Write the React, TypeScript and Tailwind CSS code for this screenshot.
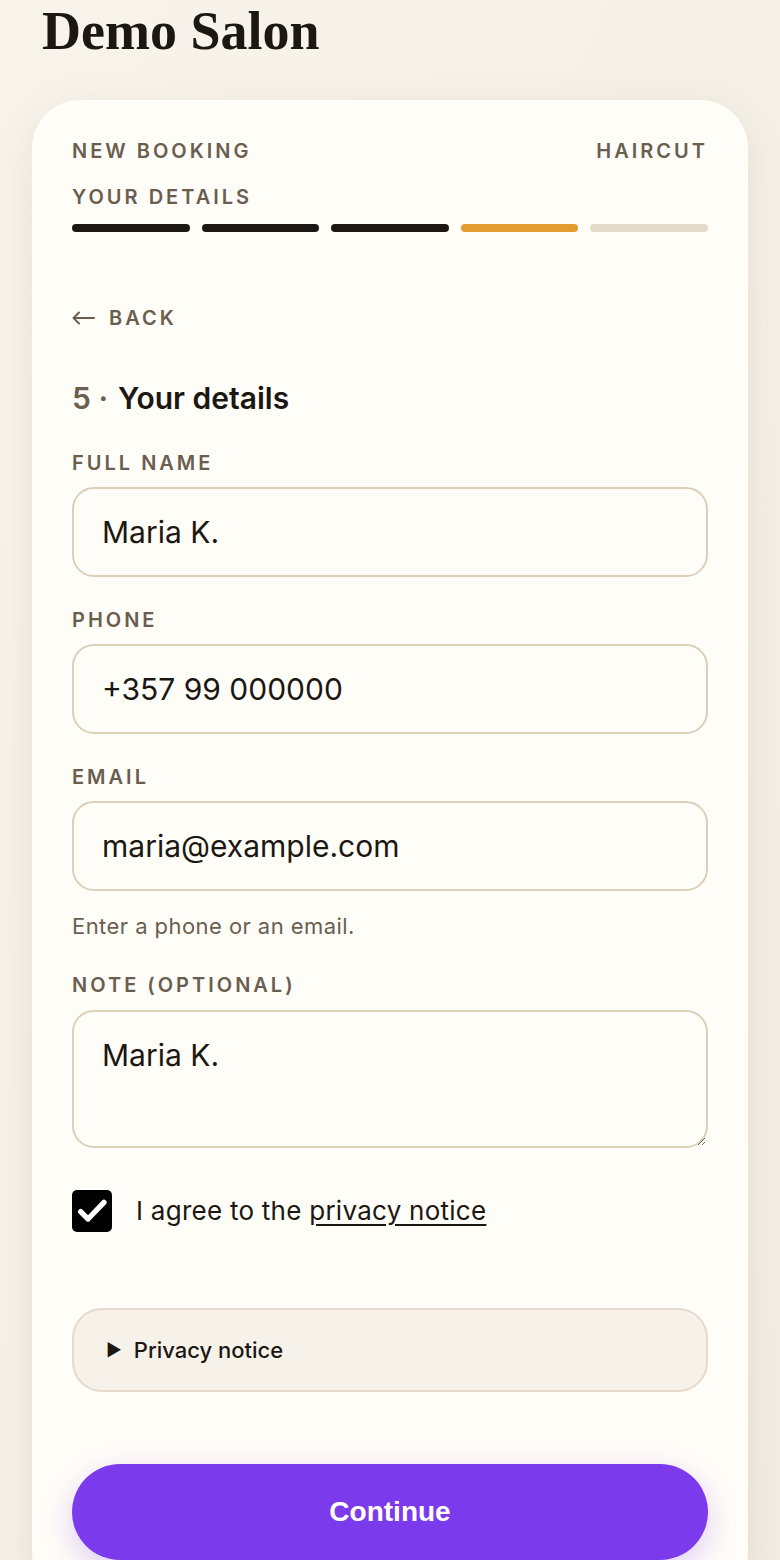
import { useState } from 'react'

const steps = ['done', 'done', 'done', 'current', 'todo']

const Field = ({ label, value }: { label: string; value: string }) => (
  <div className="flex flex-col">
    <label className="text-[20px] font-semibold tracking-[0.15em] text-[#6b5e4f] leading-none mb-[14px]">
      {label}
    </label>
    <input
      defaultValue={value}
      className="h-[90px] w-full rounded-[22px] border-2 border-[#dccfba] bg-[#fffdf7] px-[28px] text-[30px] text-[#1c1712] outline-none"
    />
  </div>
)

const App = () => {
  const [agree, setAgree] = useState(true)

  return (
    <div className="min-h-[1560px] bg-gradient-to-br from-[#f8f4ec] to-[#f2ede3] font-['Inter','Open_Sans',sans-serif] overflow-hidden">
      <h1 className="px-[42px] pt-[2px] font-['Liberation_Serif','DejaVu_Serif',serif] text-[54px] font-bold leading-[58px] text-[#1c1712]">
        Demo Salon
      </h1>

      <div className="mx-[32px] mt-[40px] rounded-[48px] bg-[#fffdf8] px-[40px] pt-[41px] pb-[40px] shadow-[0_10px_40px_rgba(120,100,70,0.12)]">
        <div className="flex items-center justify-between text-[20px] font-semibold tracking-[0.15em] text-[#6b5e4f] leading-none">
          <span>NEW BOOKING</span>
          <span>HAIRCUT</span>
        </div>
        <div className="mt-[26px] text-[20px] font-semibold tracking-[0.15em] text-[#6b5e4f] leading-none">
          YOUR DETAILS
        </div>
        <div className="mt-[17px] flex gap-[12px]">
          {steps.map((s, i) => (
            <div
              key={i}
              className={
                s === 'done'
                  ? 'h-[8px] flex-1 rounded-full bg-[#1c1712]'
                  : s === 'current'
                    ? 'h-[8px] flex-1 rounded-full bg-[#e39c2f]'
                    : 'h-[8px] flex-1 rounded-full bg-[#e5dbcc]'
              }
            />
          ))}
        </div>

        <button className="mt-[76px] flex items-center gap-[14px] text-[20px] font-semibold tracking-[0.15em] text-[#6b5e4f] leading-none">
          <svg width="23" height="14" viewBox="0 0 23 14" fill="none">
            <path d="M22 7H2M7 1.5L1.5 7L7 12.5" stroke="#6b5e4f" strokeWidth="2" strokeLinecap="round" strokeLinejoin="round" />
          </svg>
          BACK
        </button>

        <h2 className="mt-[55px] flex items-baseline text-[30px] font-semibold leading-none text-[#1c1712]">
          <span className="text-[#6b5e4f] mr-[10px]">5 ·</span>
          Your details
        </h2>

        <div className="mt-[40px] flex flex-col gap-[33px]">
          <Field label="FULL NAME" value="Maria K." />
          <Field label="PHONE" value="+357 99 000000" />
          <div className="flex flex-col">
            <Field label="EMAIL" value="maria@example.com" />
            <p className="mt-[24px] text-[22px] tracking-[0.02em] leading-none text-[#6b5e4f]">Enter a phone or an email.</p>
          </div>
          <div className="mt-[5px] flex flex-col">
            <label className="text-[20px] font-semibold tracking-[0.15em] text-[#6b5e4f] leading-none mb-[15px]">
              NOTE (OPTIONAL)
            </label>
            <textarea
              defaultValue="Maria K."
              className="h-[138px] w-full rounded-[22px] border-2 border-[#dccfba] bg-[#fffdf7] px-[28px] py-[25px] text-[30px] leading-[36px] text-[#1c1712] outline-none"
            />
          </div>
        </div>

        <label className="mt-[42px] flex items-center gap-[24px]">
          <button
            onClick={() => setAgree(!agree)}
            className={
              agree
                ? 'flex h-[42px] w-[40px] items-center justify-center rounded-[5px] bg-black'
                : 'flex h-[42px] w-[40px] items-center justify-center rounded-[5px] border-2 border-black bg-white'
            }>
            {agree && (
              <svg width="32" height="32" viewBox="0 0 24 24" fill="none">
                <path d="M3.5 12.5l5.5 5.5L21 5.5" stroke="white" strokeWidth="4" strokeLinecap="round" strokeLinejoin="round" />
              </svg>
            )}
          </button>
          <span className="text-[26px] tracking-[0.01em] leading-none text-[#1c1712]">
            I agree to the <a className="underline underline-offset-4 decoration-[2px]">privacy notice</a>
          </span>
        </label>

        <details className="mt-[76px] rounded-[30px] border-2 border-[#e5dacb] bg-[#f7f2e9] px-[32px] py-[26px]">
          <summary className="flex items-center gap-[12px] text-[22px] font-medium leading-[28px] text-[#1c1712] cursor-pointer list-none">
            <span className="text-[17px]">▶</span>
            Privacy notice
          </summary>
        </details>

        <button className="mt-[72px] h-[96px] w-full rounded-full bg-[#7c3aed] font-['Liberation_Sans',sans-serif] text-[28px] font-bold text-white shadow-[0_10px_30px_rgba(124,58,237,0.25)]">
          Continue
        </button>
      </div>
    </div>
  )
}

export default App
